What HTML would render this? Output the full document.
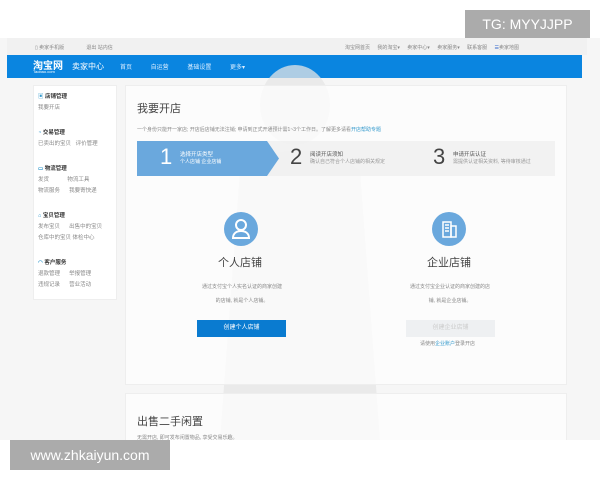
<!DOCTYPE html>
<html><head><meta charset="utf-8"><style>
*{margin:0;padding:0;box-sizing:border-box}
body{width:600px;height:480px;background:#fff;font-family:"Liberation Sans","Noto Sans CJK SC",sans-serif;position:relative;overflow:hidden;color:#555}
.a{position:absolute}
.t{font-size:5px;color:#888;white-space:nowrap}
.sb{font-size:5.5px;color:#888;white-space:nowrap}
.sb b{color:#333;display:block;margin-top:0}
</style></head><body>
<div class="a" style="left:0;top:38px;width:600px;height:402px;background:#f6f6f6"></div>
<div class="a" style="left:7px;top:38px;width:580px;height:17px;background:#f1f1f1"></div>
<div class="a t" style="left:35px;top:44px">▯ 卖家手机版 &nbsp;&nbsp;&nbsp;&nbsp;&nbsp;&nbsp;&nbsp;&nbsp;&nbsp;&nbsp;&nbsp;&nbsp;&nbsp;&nbsp; 退出 站内信</div>
<div class="a t" style="left:345px;top:44px;word-spacing:6px">淘宝网首页 我的淘宝▾ 卖家中心▾ 卖家服务▾ 联系客服 <span style="color:#36c">☰</span>卖家地图</div>
<div class="a" style="left:7px;top:55px;width:575px;height:23px;background:#0a85e0"></div>
<div class="a" style="left:33px;top:57px;color:#fff;font-size:10px;font-weight:bold">淘宝网</div>
<div class="a" style="left:33px;top:69px;color:#fff;font-size:4px">Taobao.com</div>
<div class="a" style="left:72px;top:61px;color:#fff;font-size:8px">卖家中心</div>
<div class="a" style="left:120px;top:62px;color:#dbeeff;font-size:6px;word-spacing:17px">首页 自运营 基础设置 更多▾</div>
<svg class="a" style="left:200px;top:60px" width="220" height="380"><g fill="#e6e6e6" opacity=".75"><ellipse cx="95" cy="45" rx="35" ry="40"/><path d="M40 110 Q95 70 160 110 L180 380 L20 380 Z"/></g></svg>
<div class="a" style="left:33px;top:85px;width:84px;height:215px;background:#fff;border:1px solid #eee"></div>
<div class="a sb" style="left:38px;top:92px;line-height:11px">
<b><span style="color:#39c">▣</span> 店铺管理</b>我要开店
<b style="margin-top:14px"><span style="color:#39c">◔</span> 交易管理</b>已卖出的宝贝 &nbsp; 评价管理
<b style="margin-top:14px"><span style="color:#39c">▭</span> 物流管理</b>发货 &nbsp;&nbsp;&nbsp;&nbsp;&nbsp;&nbsp;&nbsp;&nbsp;&nbsp;&nbsp; 物流工具<br>物流服务 &nbsp;&nbsp;&nbsp;&nbsp; 我要寄快递
<b style="margin-top:14px"><span style="color:#39c">⌂</span> 宝贝管理</b>发布宝贝 &nbsp;&nbsp;&nbsp;&nbsp; 出售中的宝贝<br>仓库中的宝贝 体检中心
<b style="margin-top:14px"><span style="color:#39c">◠</span> 客户服务</b>退款管理 &nbsp;&nbsp;&nbsp;&nbsp; 举报管理<br>违规记录 &nbsp;&nbsp;&nbsp;&nbsp; 营业活动</div>
<div class="a" style="left:125px;top:85px;width:442px;height:300px;background:rgba(255,255,255,.7);border:1px solid #eee"></div>
<div class="a" style="left:137px;top:100px;font-size:11px;color:#444">我要开店</div>
<div class="a t" style="left:137px;top:126px">一个身份只能开一家店; 开店后店铺无法注销; 申请到正式开通预计需1~3个工作日。了解更多请看<span style="color:#39c">开店帮助专题</span></div>
<div class="a" style="left:137px;top:141px;width:418px;height:35px;background:rgba(240,240,240,.85)"></div>
<svg class="a" style="left:137px;top:141px" width="145" height="35"><polygon points="0,0 130,0 142,17.5 130,35 0,35" fill="#6aa8dd"/></svg>
<div class="a" style="left:160px;top:144px;font-size:22px;color:#fff">1</div>
<div class="a" style="left:180px;top:150px;font-size:5.5px;color:#fff">选择开店类型<br><span style="font-size:5px">个人店铺 企业店铺</span></div>
<div class="a" style="left:290px;top:144px;font-size:22px;color:#444">2</div>
<div class="a" style="left:310px;top:150px;font-size:5.5px;color:#555">阅读开店须知<br><span style="font-size:5px;color:#999">确认自己符合个人店铺的相关规定</span></div>
<div class="a" style="left:433px;top:144px;font-size:22px;color:#444">3</div>
<div class="a" style="left:453px;top:150px;font-size:5.5px;color:#555">申请开店认证<br><span style="font-size:5px;color:#999">需提供认证相关资料, 等待审核通过</span></div>
<div class="a" style="left:224px;top:212px;width:34px;height:34px;border-radius:50%;background:#6aa8dd"></div>
<svg class="a" style="left:224px;top:212px" width="34" height="34" fill="none" stroke="#fff" stroke-width="2"><circle cx="17" cy="13" r="5"/><path d="M9 26c0-5 4-7 8-7s8 2 8 7z"/></svg>
<div class="a" style="left:218px;top:254px;font-size:11px;color:#444">个人店铺</div>
<div class="a t" style="left:200px;top:280px;text-align:center;width:84px;line-height:14px">通过支付宝个人实名认证的商家创建<br>的店铺, 就是个人店铺。</div>
<div class="a" style="left:197px;top:320px;width:89px;height:17px;background:#0a7bd0;color:#fff;font-size:6px;text-align:center;line-height:17px">创建个人店铺</div>
<div class="a" style="left:432px;top:212px;width:34px;height:34px;border-radius:50%;background:#6aa8dd"></div>
<svg class="a" style="left:432px;top:212px" width="34" height="34" fill="none" stroke="#fff" stroke-width="1.5"><rect x="11" y="10" width="8" height="15"/><rect x="19" y="14" width="5" height="11"/><path d="M13 13h4M13 16h4M13 19h4"/></svg>
<div class="a" style="left:427px;top:254px;font-size:11px;color:#444">企业店铺</div>
<div class="a t" style="left:405px;top:280px;text-align:center;width:90px;line-height:14px">通过支付宝企业认证的商家创建的店<br>铺, 就是企业店铺。</div>
<div class="a" style="left:406px;top:320px;width:89px;height:17px;background:#eef0f2;color:#ccc;font-size:6px;text-align:center;line-height:17px">创建企业店铺</div>
<div class="a t" style="left:420px;top:340px">请使用<span style="color:#39c">企业账户</span>登录开店</div>
<div class="a" style="left:125px;top:393px;width:442px;height:50px;background:rgba(255,255,255,.7);border:1px solid #eee"></div>
<div class="a" style="left:137px;top:413px;font-size:11px;color:#444">出售二手闲置</div>
<div class="a t" style="left:137px;top:434px">无需开店, 即可发布闲置物品, 享受交易乐趣。</div>
<div class="a" style="left:0;top:440px;width:600px;height:40px;background:#fff"></div>
<div class="a" style="left:465px;top:10px;width:125px;height:28px;background:#ababab;color:#fff;font-size:14px;line-height:28px;text-align:center">TG: MYYJJPP</div>
<div class="a" style="left:10px;top:440px;width:160px;height:30px;background:#ababab;color:#fff;font-size:14px;line-height:30px;text-align:center">www.zhkaiyun.com</div>
</body></html>
